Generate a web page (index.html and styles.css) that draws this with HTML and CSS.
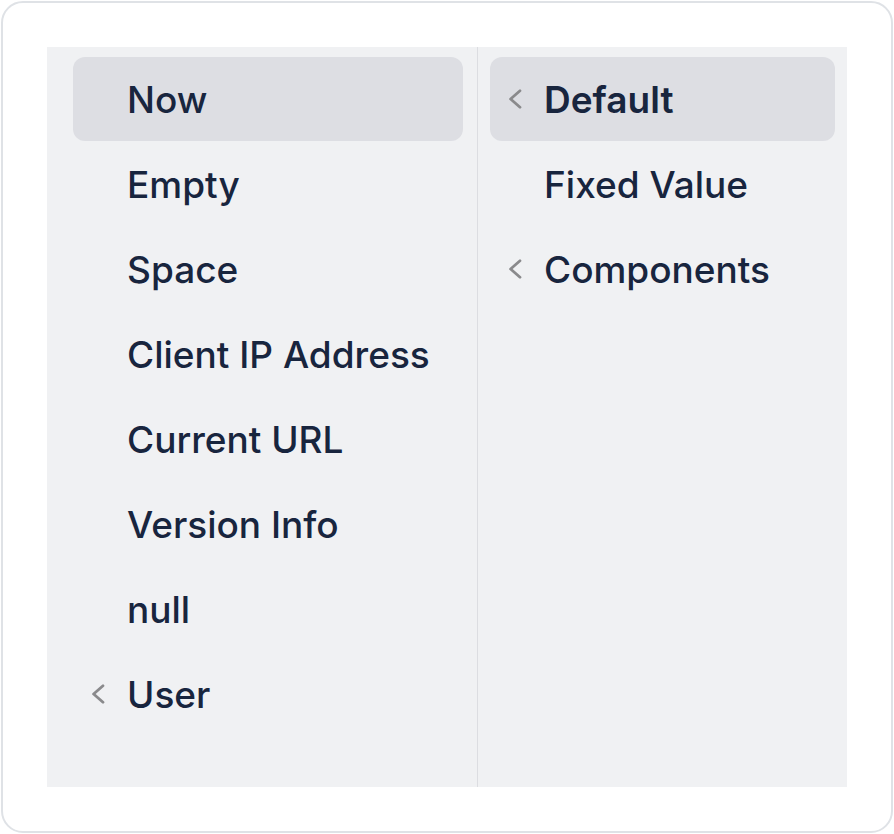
FILE: index.html
```html
<!DOCTYPE html>
<html>
<head>
<meta charset="utf-8">
<link rel="stylesheet" href="styles.css">
</head>
<body>
<div class="card">
  <div class="panel">
    <div class="col col-left">
      <div class="item active"><span class="chev"></span><span class="label">Now</span></div>
      <div class="item"><span class="chev"></span><span class="label">Empty</span></div>
      <div class="item"><span class="chev"></span><span class="label">Space</span></div>
      <div class="item"><span class="chev"></span><span class="label">Client IP Address</span></div>
      <div class="item"><span class="chev"></span><span class="label">Current URL</span></div>
      <div class="item"><span class="chev"></span><span class="label">Version Info</span></div>
      <div class="item"><span class="chev"></span><span class="label">null</span></div>
      <div class="item"><span class="chev"><svg class="chev-icon" viewBox="0 0 14 20" width="14" height="20"><path d="M12 1.8 L2.6 10 L12 18.2" /></svg></span><span class="label">User</span></div>
    </div>
    <div class="col col-right">
      <div class="item active"><span class="chev"><svg class="chev-icon" viewBox="0 0 14 20" width="14" height="20"><path d="M12 1.8 L2.6 10 L12 18.2" /></svg></span><span class="label strong">Default</span></div>
      <div class="item"><span class="chev"></span><span class="label">Fixed Value</span></div>
      <div class="item"><span class="chev"><svg class="chev-icon" viewBox="0 0 14 20" width="14" height="20"><path d="M12 1.8 L2.6 10 L12 18.2" /></svg></span><span class="label">Components</span></div>
    </div>
  </div>
</div>
</body>
</html>
```
FILE: styles.css
```css
html, body {
  margin: 0;
  padding: 0;
  background: #ffffff;
}
body {
  font-family: Inter, "Noto Sans", sans-serif;
  width: 894px;
  height: 834px;
}
.card {
  box-sizing: border-box;
  margin: 1px;
  width: 892px;
  height: 832px;
  border: 2px solid #dfe2e6;
  border-radius: 22px;
  padding: 44px;
  background: #ffffff;
}
.panel {
  display: flex;
  height: 740px;
  background: #f0f1f3;
}
.col {
  display: flex;
  flex-direction: column;
  gap: 1px;
  padding-top: 10px;
  box-sizing: border-box;
}
.col-left {
  width: 431px;
  padding-left: 26px;
  padding-right: 14px;
  border-right: 1px solid #dcdde1;
}
.col-right {
  flex: 1;
  padding-left: 12px;
  padding-right: 12px;
}
.item {
  display: flex;
  align-items: center;
  height: 84px;
  padding-left: 18px;
  border-radius: 12px;
  color: #18253e;
}
.item.active {
  background: #dddee3;
}
.chev {
  width: 14px;
  height: 20px;
  display: flex;
  margin-right: 22px;
  flex-shrink: 0;
}
.chev-icon {
  display: block;
  width: 14px;
  height: 20px;
}
.chev-icon path {
  fill: none;
  stroke: #8a8a8c;
  stroke-width: 2.8;
  stroke-linecap: round;
  stroke-linejoin: round;
}
.label {
  font-size: 37px;
  font-weight: 500;
  letter-spacing: 0;
  white-space: nowrap;
}
.label.strong {
  font-weight: 600;
}
```
